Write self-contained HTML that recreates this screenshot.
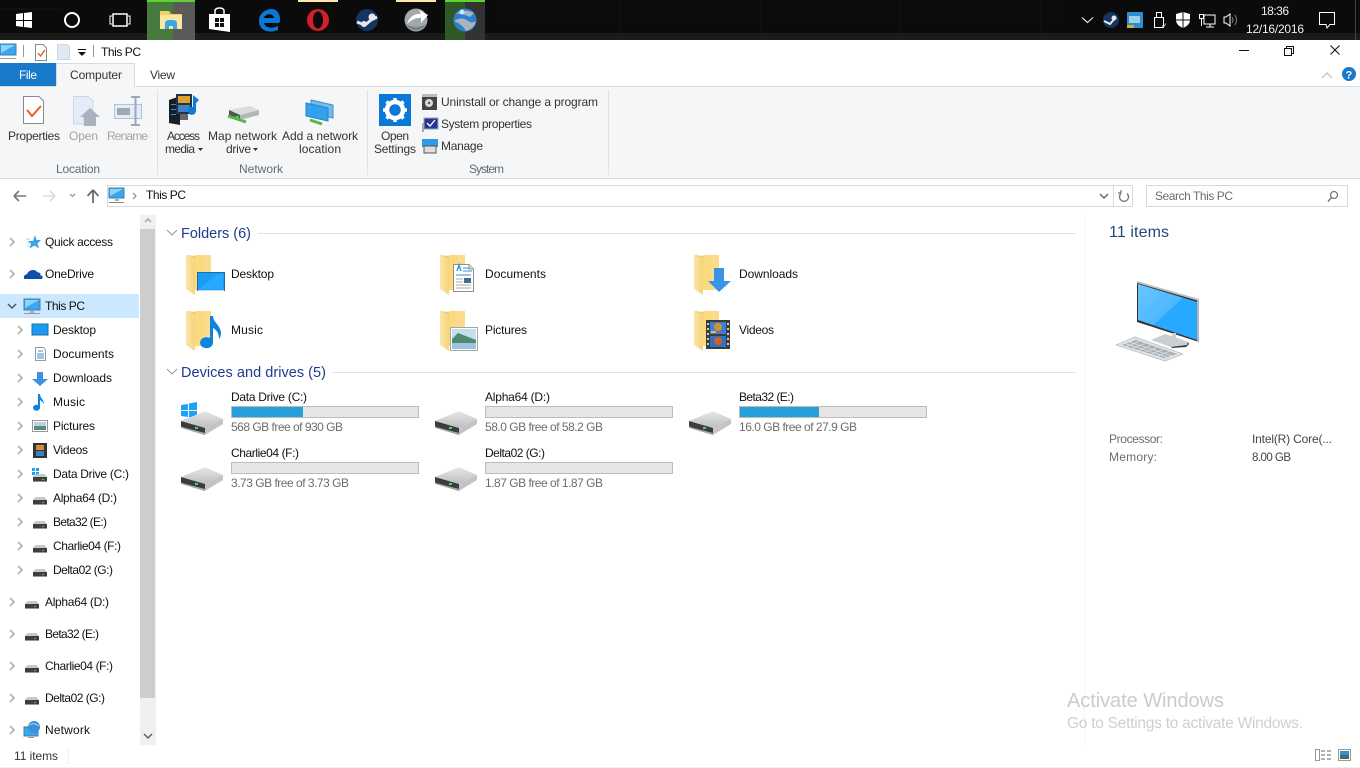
<!DOCTYPE html>
<html><head><meta charset="utf-8"><title>This PC</title>
<style>
html,body{margin:0;padding:0;background:#fff;overflow:hidden}
svg{display:block}
text{font-family:"Liberation Sans",sans-serif;font-size:12px;fill:#111}
.g{fill:#6d6d6d}.d{fill:#a3a3a3}.r{fill:#333}.l{fill:#636b75}
.h{font-size:14.5px;fill:#1e3a8f}
.w{fill:#f0f0f0}
</style></head><body>
<svg width="1360" height="768" viewBox="0 0 1360 768" xmlns="http://www.w3.org/2000/svg">
<defs>
<linearGradient id="scr" x1="0" y1="0" x2="1" y2="1"><stop offset="0" stop-color="#6cc5ff"/><stop offset=".5" stop-color="#4cb8ff"/><stop offset=".5" stop-color="#27a9ff"/><stop offset="1" stop-color="#27a9ff"/></linearGradient>
<linearGradient id="fo" x1="0" y1="0" x2="1" y2="0"><stop offset="0" stop-color="#fbe6a6"/><stop offset="1" stop-color="#f5d27e"/></linearGradient>
<linearGradient id="dt" x1="0" y1="0" x2="0" y2="1"><stop offset="0" stop-color="#e6e6e6"/><stop offset="1" stop-color="#bdbdbd"/></linearGradient>
<g id="chev"><path d="M-2-4 2 0-2 4" fill="none" stroke="#a6a6a6" stroke-width="1.5"/></g>
<g id="folder">
<path d="M9 0H25V35H9Z" fill="#fad97f"/>
<path d="M17 0H25V35H17Z" fill="#fbdc8c"/>
<path d="M0 0 9 3V40L0 34Z" fill="url(#fo)"/>
<path d="M9 3 0 0 9 1Z" fill="#f0c860"/>
</g>
<g id="sd">
<path d="M2.500 0H11.500L14 3H0Z" fill="#c8c8c8"/>
<rect x="0" y="3" width="14" height="5" fill="#3f3f3f"/>
<rect x="0" y="7" width="14" height="1" fill="#999"/>
<rect x="9" y="5" width="2" height="1" fill="#3fd04a"/>
</g>
<g id="bd">
<path d="M0 10 22 1Q24 0 26 1L42 8 24 17Z" fill="url(#dt)"/>
<path d="M24 17 42 8V13L24 24Z" fill="#c4c4c4"/>
<path d="M0 10 24 17V24L1 17Q0 16 0 14Z" fill="#3c3c3c"/>
<path d="M1 16 24 22V24L1 17Z" fill="#a8a8a8"/>
<rect x="14" y="16" width="3" height="2" fill="#42dd5a"/>
</g>
<g id="monS">
<rect x="0" y="0" width="16" height="11" fill="#3aa6ee" stroke="#3f7fa8"/>
<path d="M1 1H15L1 9Z" fill="#8fd3fb"/>
<rect x="6" y="12" width="4" height="2" fill="#aab"/>
<rect x="0" y="14" width="16" height="1" fill="#999"/>
</g>
</defs>

<!-- Taskbar -->
<rect width="1360" height="40" fill="#0b0b0b"/>
<rect y="33" width="1360" height="7" fill="#1b1b1b"/>
<g fill="#101010"><rect x="0" y="8" width="60" height="2"/><rect x="500" y="2" width="560" height="1"/><rect x="500" y="12" width="560" height="1"/><rect x="500" y="22" width="560" height="1"/><rect x="620" y="0" width="1" height="33"/><rect x="760" y="0" width="1" height="33"/><rect x="900" y="0" width="1" height="33"/><rect x="1040" y="0" width="1" height="33"/></g>
<rect x="147" width="26" height="40" fill="#487a3d"/>
<rect x="173" width="22" height="40" fill="#5a5a5a"/>
<rect x="147" width="48" height="2" fill="#5bd62e"/>
<rect x="298" width="40" height="2" fill="#fde8aa"/>
<rect x="396" width="40" height="2" fill="#fde8aa"/>
<rect x="445" width="20" height="40" fill="#2f5a27"/>
<rect x="465" width="20" height="40" fill="#333"/>
<rect x="445" width="40" height="2" fill="#5bd62e"/>
<path d="M16 14 23 13V20H16ZM24 13 32 12V20H24ZM16 21H23V27L16 26ZM24 21H32V28L24 27Z" fill="#fff"/>
<circle cx="72" cy="20" r="7" fill="none" stroke="#fff" stroke-width="2"/>
<path d="M113 14H127V26H113Z" fill="none" stroke="#fff" stroke-width="1.500"/>
<path d="M112 16H110V24H112M128 16H130V24H128" fill="none" stroke="#fff"/>
<!-- explorer -->
<path d="M160 11H169L171 14H182V29H160Z" fill="#f5cf63"/>
<rect x="160" y="15" width="22" height="14" fill="#fbe6a0"/>
<path d="M165 29V24Q165 20 169 20H173Q177 20 177 24V29H173V26H169V29Z" fill="#39a7e4"/>
<!-- store -->
<path d="M209 14H230V32L209 29Z" fill="#fff"/>
<path d="M215 14V11Q215 8 219.500 8T224 11V14" fill="none" stroke="#fff" stroke-width="1.500"/>
<path d="M215 18H219V22H215ZM220 18H224V22H220ZM215 23H219V27H215ZM220 23H224V27H220Z" fill="#111"/>
<!-- edge -->
<path d="M279 23H264C265 28 272 29 278 26V30C268 34 259 30 259 21 259 13 266 9 272 9 277 9 280 14 280 19 280 21 280 22 279 23ZM264 18H274C274 13 265 13 264 18Z" fill="#0a78d7" fill-rule="evenodd"/>
<!-- opera -->
<path d="M318 9A11 11 0 1 0 318 31 11 11 0 1 0 318 9ZM318 11.500C321 11.500 323 15 323 20S321 28.500 318 28.500 313 25 313 20 315 11.500 318 11.500Z" fill="#d21f2a" fill-rule="evenodd"/>
<!-- steam -->
<circle cx="367" cy="20" r="11" fill="#12365f"/>
<path d="M357 22 365 25 371 20 377 17" stroke="#e4e8ee" stroke-width="3" fill="none"/>
<circle cx="372" cy="17" r="3.500" fill="#e4e8ee"/><circle cx="364" cy="24" r="3" fill="#e4e8ee"/>
<!-- grey app -->
<circle cx="416" cy="20" r="11.500" fill="#a2a9ac"/>
<path d="M407 24Q411 13 421 14L419 10 428 15 421 23 421 18Q414 17 407 24Z" fill="#fff"/>
<path d="M406 24A11 11 0 0 0 426 24Q416 30 406 24Z" fill="#7c8386"/>
<!-- globe -->
<circle cx="465" cy="20" r="11.500" fill="#2f7fd0"/>
<path d="M456 14Q464 8 474 13L470 17Q462 13 456 14ZM454 21Q462 16 468 21 472 24 476 21 474 29 466 31 462 24 454 21Z" fill="#a9b4bc"/>
<circle cx="462" cy="12" r="2.500" fill="#cfe7fb"/>
<!-- tray -->
<path d="M1082 17.500 1087.500 22.500 1093 17.500" fill="none" stroke="#eee" stroke-width="1.100"/>
<circle cx="1111" cy="20" r="8" fill="#12365f"/><path d="M1104 21 1110 24 1116 17" stroke="#e8e8e8" stroke-width="2" fill="none"/><circle cx="1114" cy="18" r="2.500" fill="#e8e8e8"/>
<rect x="1127" y="12" width="16" height="16" rx="1" fill="#2c8fd0"/><rect x="1129" y="16" width="11" height="7" fill="#9ed0ea"/><rect x="1127" y="25" width="7" height="3" fill="#d8b030"/>
<path d="M1156.500 12.500H1161.500V17.500H1156.500ZM1154.500 17.500H1163.500V27.500H1154.500Z" fill="none" stroke="#fff"/><path d="M1162 25.500 1163.500 27 1166 23.500" fill="none" stroke="#bbb"/>
<path d="M1183 12 1176 14V20Q1176 25 1183 28 1190 25 1190 20V14Z" fill="#fff"/><path d="M1183 12V28M1176 20H1190" stroke="#111" stroke-width="1"/>
<path d="M1204 15H1215V24H1204ZM1199.500 14.500H1203.500V18.500H1199.500ZM1201.500 19V26M1206 27H1214M1210 24V27" fill="none" stroke="#fff"/>
<path d="M1224 17V23H1226L1230 26V14L1226 17Z" fill="none" stroke="#fff"/><path d="M1232 17Q1234 20 1232 23M1235 15Q1238 20 1235 25" fill="none" stroke="#888"/>
<text class="w" x="1261" y="15" textLength="28">18:36</text>
<text class="w" x="1246" y="33" textLength="58">12/16/2016</text>
<path d="M1319.500 12.500H1334.500V24.500H1330L1327 28 1326 24.500H1319.500Z" fill="none" stroke="#fff"/>
<rect x="1355" width="1" height="40" fill="#444"/>

<!-- Title bar -->
<g transform="translate(0,44)"><rect x="0" y="0" width="16" height="11" fill="#3aa6ee" stroke="#3f7fa8"/><path d="M1 1H15L1 9Z" fill="#8fd3fb"/><rect x="0" y="14" width="16" height="1" fill="#999"/></g>
<rect x="23" y="45" width="1" height="12" fill="#999"/>
<path d="M35.500 44.500H43L46.500 48V60.500H35.500Z" fill="#fff" stroke="#888"/><path d="M38 53 40.500 56 45 50" fill="none" stroke="#e8531f" stroke-width="1.300"/>
<path d="M57.500 44.500H67L69.500 47V59.500H57.500Z" fill="#dfe8f5" stroke="#ccd6e6"/>
<rect x="78" y="49" width="8" height="1" fill="#111"/><path d="M78 52H86L82 56Z" fill="#111"/>
<rect x="93" y="45" width="1" height="12" fill="#999"/>
<text x="101" y="56" textLength="40">This PC</text>
<rect x="1239" y="50" width="10" height="1" fill="#111"/>
<path d="M1284.500 48.500H1291.500V55.500H1284.500ZM1286.500 48V46.500H1293.500V53.500H1292" fill="none" stroke="#111"/>
<path d="M1330.500 45.500 1339.500 54.500M1339.500 45.500 1330.500 54.500" stroke="#111" stroke-width="1.100"/>

<!-- Tabs -->
<rect x="0" y="63" width="56" height="23" fill="#1979ca"/>
<text x="19" y="79" textLength="18" style="fill:#fff">File</text>
<path d="M56.500 86V63.500H134.500V86" fill="#f5f6f7" stroke="#dadbdc"/>
<text x="70" y="79" textLength="52" style="fill:#333">Computer</text>
<text x="150" y="79" textLength="25" style="fill:#333">View</text>
<path d="M1322 78 1327 73 1332 78" fill="none" stroke="#c8c8c8" stroke-width="1.500"/>
<circle cx="1349" cy="74" r="7" fill="#1979ca"/>
<text x="1345.500" y="78.500" style="fill:#fff;font-size:11px;font-weight:bold">?</text>

<!-- Ribbon -->
<rect x="0" y="86" width="1360" height="92" fill="#f5f6f7"/>
<rect x="134" y="86" width="1226" height="1" fill="#dadbdc"/>
<rect x="0" y="86" width="56" height="1" fill="#dadbdc"/>
<rect x="0" y="178" width="1360" height="1" fill="#dadbdc"/>
<rect x="157" y="90" width="1" height="85" fill="#dfe1e3"/>
<rect x="367" y="90" width="1" height="85" fill="#dfe1e3"/>
<rect x="608" y="90" width="1" height="85" fill="#dfe1e3"/>
<!-- properties -->
<path d="M23.500 96.500H39L43.500 101V123.500H23.500Z" fill="#fff" stroke="#8a8a8a"/>
<path d="M27 110 32 116 41 106" fill="none" stroke="#ef5a24" stroke-width="2"/>
<!-- open -->
<path d="M73.500 96.500H88L93 101V117H84V124H73.500Z" fill="#e4ecf8" stroke="#ccd6e8"/>
<path d="M84 126V117H80L90 108 100 117H96V126Z" fill="#a8b3bf"/>
<!-- rename -->
<rect x="114.500" y="104.500" width="27" height="14" fill="#e4ecf8" stroke="#b4c2d4"/>
<rect x="117" y="108" width="13" height="7" fill="#9aa8b8"/>
<path d="M131 97H140M131 125H140M135.500 97V125" fill="none" stroke="#9aa8b8" stroke-width="2"/>
<!-- access media -->
<path d="M169 100 180 96V125L169 123Z" fill="#1a1d24"/>
<path d="M180 96 188 99V120H180Z" fill="#63666c"/>
<g fill="#2c8fd6"><rect x="171" y="104" width="5" height="1"/><rect x="171" y="109" width="6" height="1"/><rect x="171" y="114" width="5" height="1"/></g>
<rect x="176" y="94" width="16" height="20" fill="#26324a"/><rect x="178" y="96" width="12" height="7" fill="#d8a130"/><rect x="178" y="105" width="12" height="7" fill="#3d82c4"/>
<path d="M193 95 199 100 196 103V111A4 4 0 1 1 193 107Z" fill="#0b7dd8"/>
<!-- map net drive -->
<path d="M229 110 250 106 259 110 240 115Z" fill="#dcdcdc"/>
<path d="M229 110 240 115V120L229 116Z" fill="#555"/>
<path d="M240 115 259 110V115L240 120Z" fill="#b5b5b5"/>
<path d="M228 116 246 122" stroke="#58b548" stroke-width="3"/>
<rect x="236" y="116" width="3" height="2" fill="#33dd55"/>
<!-- add net location -->
<path d="M311 100 333 105V118L311 113Z" fill="#6cbdf0" stroke="#3e8fc6"/>
<path d="M306 103 328 108V121L306 116Z" fill="#31a2ee" stroke="#2f7fb8"/>
<path d="M310 120 322 124" stroke="#58b548" stroke-width="3"/>
<!-- settings -->
<rect x="379" y="94" width="32" height="32" fill="#0a78d7"/>
<circle cx="395" cy="110" r="8" fill="none" stroke="#fff" stroke-width="4.500"/>
<g stroke="#fff" stroke-width="3.500"><path d="M395 98V102M395 118V122M383 110H387M403 110H407M386.500 101.500 389.300 104.300M400.700 115.700 403.500 118.500M386.500 118.500 389.300 115.700M400.700 104.300 403.500 101.500"/></g>
<!-- mini -->
<rect x="422" y="96" width="15" height="14" fill="#444"/><rect x="422" y="94" width="15" height="3" fill="#bbb"/><circle cx="429" cy="103" r="4" fill="#d8d8d8"/><circle cx="429" cy="103" r="1.200" fill="#555"/>
<rect x="424" y="118" width="14" height="11" fill="#26358f" stroke="#9aa8c0"/><path d="M427 123 430 126 435 120" stroke="#fff" stroke-width="1.300" fill="none"/><rect x="422" y="123" width="2" height="9" fill="#aaa"/>
<rect x="422" y="139" width="16" height="8" fill="#2f9ae0"/><rect x="424" y="146" width="12" height="7" fill="#ddd" stroke="#555"/>
<g>
<text x="8" y="140" textLength="52" class="r">Properties</text>
<text x="69" y="140" textLength="29" class="d">Open</text>
<text x="107" y="140" textLength="41" class="d">Rename</text>
<text x="167" y="140" textLength="33" class="r">Access</text>
<text x="165" y="153" textLength="30" class="r">media</text>
<path d="M198 148H203L200.500 151Z" fill="#333"/>
<text x="208" y="140" textLength="69" class="r">Map network</text>
<text x="226" y="153" textLength="25" class="r">drive</text>
<path d="M253 148H258L255.500 151Z" fill="#333"/>
<text x="282" y="140" textLength="76" class="r">Add a network</text>
<text x="299" y="153" textLength="42" class="r">location</text>
<text x="381" y="140" textLength="28" class="r">Open</text>
<text x="374" y="153" textLength="42" class="r">Settings</text>
<text x="441" y="106" textLength="157" class="r">Uninstall or change a program</text>
<text x="441" y="128" textLength="91" class="r">System properties</text>
<text x="441" y="150" textLength="42" class="r">Manage</text>
<text x="56" y="173" textLength="44" class="l">Location</text>
<text x="239" y="173" textLength="44" class="l">Network</text>
<text x="469" y="173" textLength="35" class="l">System</text>
</g>

<!-- Address row -->
<path d="M14 196H26M14 196 19 191M14 196 19 201" fill="none" stroke="#777" stroke-width="1.600"/>
<path d="M43 196H55M55 196 50 191M55 196 50 201" fill="none" stroke="#ddd" stroke-width="1.600"/>
<path d="M70 194 72.500 196.500 75 194" fill="none" stroke="#999" stroke-width="1.300"/>
<path d="M93 203V191M93 190 87.500 196M93 190 98.500 196" fill="none" stroke="#666" stroke-width="1.700"/>
<rect x="107.500" y="185.500" width="1025" height="21" fill="#fff" stroke="#d9d9d9"/>
<g transform="translate(109,188)"><rect x="0" y="0" width="15" height="10" fill="#3aa6ee" stroke="#3f7fa8"/><path d="M1 1H14L1 8Z" fill="#8fd3fb"/><rect x="6" y="11" width="4" height="2" fill="#aab"/><rect x="0" y="14" width="15" height="1" fill="#888"/></g>
<path d="M133 193 136 196 133 199" fill="none" stroke="#888" stroke-width="1.200"/>
<text x="146" y="199" textLength="40">This PC</text>
<path d="M1100 194 1104 198 1108 194" fill="none" stroke="#666" stroke-width="1.500"/>
<rect x="1113" y="186" width="1" height="20" fill="#d9d9d9"/>
<path d="M1121 193.500A4.500 4.500 0 1 0 1127 193.500M1121 193V190M1121 193H1118" fill="none" stroke="#777" stroke-width="1.300"/>
<rect x="1146.500" y="185.500" width="201" height="21" fill="#fff" stroke="#d9d9d9"/>
<text x="1155" y="200" textLength="78" class="g">Search This PC</text>
<circle cx="1334" cy="195" r="3.500" fill="none" stroke="#777" stroke-width="1.300"/><path d="M1331.500 197.500 1328 201.500" stroke="#777" stroke-width="1.500"/>

<!-- Nav pane -->
<rect x="0" y="294" width="139" height="24" fill="#cce8ff"/>
<rect x="140" y="215" width="16" height="530" fill="#f0f0f0"/>
<rect x="140" y="229" width="15" height="469" fill="#cdcdcd"/>
<path d="M145 222 148 219 151 222" fill="none" stroke="#a6a6a6" stroke-width="1.500"/>
<path d="M144 734 148 738 152 734" fill="none" stroke="#606060" stroke-width="1.500"/>
<use href="#chev" x="12" y="242"/><use href="#chev" x="12" y="274"/>
<path d="M8 304 12 308 16 304" fill="none" stroke="#555" stroke-width="1.500"/>
<use href="#chev" x="20" y="330"/><use href="#chev" x="20" y="354"/><use href="#chev" x="20" y="378"/><use href="#chev" x="20" y="402"/><use href="#chev" x="20" y="426"/><use href="#chev" x="20" y="450"/><use href="#chev" x="20" y="474"/><use href="#chev" x="20" y="498"/><use href="#chev" x="20" y="522"/><use href="#chev" x="20" y="546"/><use href="#chev" x="20" y="570"/>
<use href="#chev" x="12" y="602"/><use href="#chev" x="12" y="634"/><use href="#chev" x="12" y="666"/><use href="#chev" x="12" y="698"/><use href="#chev" x="12" y="730"/>
<!-- quick access star -->
<path d="M35 235 36.500 240H41L37.500 243.500 39 248.500 34.500 245.500 29.500 248.500 31 243.500 28 241H33Z" fill="#3ba2e8"/>
<path d="M26 239H30M27 243H30M27 246H29" stroke="#9dd0f2"/>
<!-- onedrive -->
<path d="M24 279Q23 275 27 274 29 270 33 270 36 270 37 272 42 273 40 275 44 276 42 279Z" fill="#0f4fa8"/>
<use href="#monS" x="24" y="299"/>
<rect x="32" y="324" width="16" height="11" fill="#1c9bf2" stroke="#1a6fa8"/>
<path d="M35.500 347.500H43.500L45.500 350V360.500H35.500Z" fill="#fff" stroke="#999"/><path d="M38 351H43M37 354H44M37 356H44M37 358H44" stroke="#3a8fd0"/>
<path d="M37 372H43V379H48L40 386 32 379H37Z" fill="#3b8fe0"/>
<path d="M38 394H40C40 398 44 400 44 404 43 402 41 401 40 400V408A3.500 3 0 1 1 38 405Z" fill="#0a84e0"/>
<rect x="32.500" y="420.500" width="15" height="11" fill="#fff" stroke="#999"/><rect x="34" y="422" width="12" height="4" fill="#b8d4e0"/><rect x="34" y="426" width="12" height="4" fill="#5a8a78"/>
<rect x="33" y="443" width="14" height="15" fill="#333"/><rect x="36" y="445" width="8" height="5" fill="#d88a40"/><rect x="36" y="451" width="8" height="5" fill="#3d82c4"/>
<g fill="#1ba1f7"><rect x="32" y="468" width="3" height="3"/><rect x="36" y="468" width="3" height="3"/><rect x="32" y="472" width="3" height="3"/><rect x="36" y="472" width="3" height="3"/></g>
<use href="#sd" x="33" y="474"/>
<use href="#sd" x="33" y="497"/><use href="#sd" x="33" y="521"/><use href="#sd" x="33" y="545"/><use href="#sd" x="33" y="569"/>
<use href="#sd" x="25" y="601"/><use href="#sd" x="25" y="633"/><use href="#sd" x="25" y="665"/><use href="#sd" x="25" y="697"/>
<rect x="24" y="727" width="14" height="9" fill="#3aa6ee" stroke="#3f7fa8"/><circle cx="34" cy="727" r="6" fill="#3c90d8"/><path d="M29 725Q34 722 39 726" stroke="#a8d4f2" fill="none"/><rect x="28" y="737" width="6" height="1" fill="#999"/>
<text x="45" y="246" textLength="68">Quick access</text>
<text x="45" y="278" textLength="49">OneDrive</text>
<text x="45" y="310" textLength="40">This PC</text>
<text x="53" y="334" textLength="43">Desktop</text>
<text x="53" y="358" textLength="61">Documents</text>
<text x="53" y="382" textLength="59">Downloads</text>
<text x="53" y="406" textLength="32">Music</text>
<text x="53" y="430" textLength="42">Pictures</text>
<text x="53" y="454" textLength="35">Videos</text>
<text x="53" y="478" textLength="76">Data Drive (C:)</text>
<text x="53" y="502" textLength="64">Alpha64 (D:)</text>
<text x="53" y="526" textLength="54">Beta32 (E:)</text>
<text x="53" y="550" textLength="68">Charlie04 (F:)</text>
<text x="53" y="574" textLength="60">Delta02 (G:)</text>
<text x="45" y="606" textLength="64">Alpha64 (D:)</text>
<text x="45" y="638" textLength="54">Beta32 (E:)</text>
<text x="45" y="670" textLength="68">Charlie04 (F:)</text>
<text x="45" y="702" textLength="60">Delta02 (G:)</text>
<text x="45" y="734" textLength="45">Network</text>
<text x="14" y="760" textLength="44" style="fill:#333">11 items</text>
<rect x="68" y="748" width="1" height="16" fill="#f0f0f0"/>

<!-- Main content -->
<path d="M167 230 172 235 177 230" fill="none" stroke="#999" stroke-width="1.100"/>
<text x="181" y="238" textLength="70" class="h">Folders (6)</text>
<rect x="258" y="233" width="818" height="1" fill="#e3e3e3"/>
<path d="M167 369 172 374 177 369" fill="none" stroke="#999" stroke-width="1.100"/>
<text x="181" y="377" textLength="145" class="h">Devices and drives (5)</text>
<rect x="333" y="372" width="743" height="1" fill="#e3e3e3"/>

<use href="#folder" x="186" y="255"/><use href="#folder" x="440" y="255"/><use href="#folder" x="694" y="255"/>
<use href="#folder" x="186" y="311"/><use href="#folder" x="440" y="311"/><use href="#folder" x="694" y="311"/>
<!-- desktop -->
<rect x="197.500" y="272.500" width="27" height="18" fill="#1b9df6" stroke="#1c6fa6"/>
<path d="M199 289 218 274H223V289Z" fill="#26a9ff"/>
<rect x="198" y="290" width="26" height="1" fill="#bfe3fa"/>
<!-- music -->
<path d="M210 316H213C213 322 221 326 221 333 221 336 220 338 219 339 219 334 217 330 213 328V342A6.500 5.500 0 1 1 210 338Z" fill="#0a84e0"/>
<!-- documents -->
<path d="M453.500 264.500H469L473.500 269V291.500H453.500Z" fill="#fff" stroke="#8f8f8f"/>
<path d="M469 264.500V269H473.500" fill="#ddd" stroke="#8f8f8f"/>
<path d="M457 271 459 265 461 271" fill="none" stroke="#2f9ae8" stroke-width="1.500"/>
<path d="M463 268H469M463 271H472M456 275H471" stroke="#3a8fd0"/>
<path d="M456 279H463M456 282H463M456 285H471M456 288H471" stroke="#aaa"/>
<rect x="464" y="278" width="7" height="5" fill="#3f6f80"/>
<!-- downloads -->
<path d="M714 268H724V281H731L719 292 708 281H714Z" fill="#3a94e6"/>
<!-- pictures -->
<rect x="450.500" y="327.500" width="27" height="23" fill="#fff" stroke="#a6a6a6"/>
<rect x="452" y="329" width="24" height="11" fill="#c4e0f0"/>
<path d="M452 339 458 333 476 340V343H452Z" fill="#4e8a70"/>
<rect x="452" y="343" width="24" height="6" fill="#9cc4dc"/>
<!-- videos -->
<rect x="706" y="320" width="24" height="29" fill="#3c3c3c"/>
<rect x="710" y="322" width="16" height="12" fill="#3d7fd0"/><rect x="710" y="336" width="16" height="11" fill="#2f70c0"/>
<circle cx="718" cy="327" r="4" fill="#d8902a"/><circle cx="718" cy="341" r="4" fill="#d0602a"/>
<rect x="711" y="331" width="5" height="2" fill="#d8c040"/>
<g fill="#ccc"><rect x="707" y="323" width="2" height="2"/><rect x="707" y="328" width="2" height="2"/><rect x="707" y="333" width="2" height="2"/><rect x="707" y="338" width="2" height="2"/><rect x="707" y="343" width="2" height="2"/><rect x="727" y="323" width="2" height="2"/><rect x="727" y="328" width="2" height="2"/><rect x="727" y="333" width="2" height="2"/><rect x="727" y="338" width="2" height="2"/><rect x="727" y="343" width="2" height="2"/></g>
<text x="231" y="278" textLength="43">Desktop</text>
<text x="485" y="278" textLength="61">Documents</text>
<text x="739" y="278" textLength="59">Downloads</text>
<text x="231" y="334" textLength="32">Music</text>
<text x="485" y="334" textLength="42">Pictures</text>
<text x="739" y="334" textLength="35">Videos</text>

<!-- drives -->
<g fill="#1ba1f7"><path d="M181 405 188 404V410H181ZM189 403.500 197 402V410H189ZM181 411H188V417L181 416ZM189 411H197V418L189 417Z"/></g>
<use href="#bd" x="181" y="411"/><use href="#bd" x="435" y="411"/><use href="#bd" x="689" y="411"/>
<use href="#bd" x="181" y="467"/><use href="#bd" x="435" y="467"/>
<g fill="#e6e6e6" stroke="#bcbcbc">
<rect x="231.500" y="406.500" width="187" height="11"/><rect x="485.500" y="406.500" width="187" height="11"/><rect x="739.500" y="406.500" width="187" height="11"/>
<rect x="231.500" y="462.500" width="187" height="11"/><rect x="485.500" y="462.500" width="187" height="11"/>
</g>
<rect x="232" y="407" width="71" height="10" fill="#26a0da"/>
<rect x="740" y="407" width="79" height="10" fill="#26a0da"/>
<text x="231" y="401" textLength="76">Data Drive (C:)</text>
<text x="231" y="431" textLength="112" class="g">568 GB free of 930 GB</text>
<text x="485" y="401" textLength="65">Alpha64 (D:)</text>
<text x="485" y="431" textLength="118" class="g">58.0 GB free of 58.2 GB</text>
<text x="739" y="401" textLength="55">Beta32 (E:)</text>
<text x="739" y="431" textLength="118" class="g">16.0 GB free of 27.9 GB</text>
<text x="231" y="457" textLength="68">Charlie04 (F:)</text>
<text x="231" y="487" textLength="118" class="g">3.73 GB free of 3.73 GB</text>
<text x="485" y="457" textLength="60">Delta02 (G:)</text>
<text x="485" y="487" textLength="118" class="g">1.87 GB free of 1.87 GB</text>

<!-- Details pane -->
<rect x="1084" y="215" width="1" height="530" fill="#f4f4f4"/>
<text x="1109" y="237" textLength="60" style="font-size:16px;fill:#1f4a7a">11 items</text>
<path d="M1137 282 1199 300V342L1137 322Z" fill="#333"/>
<path d="M1138 284 1197 302V340L1138 320Z" fill="url(#scr)"/>
<path d="M1137 281 1199 299 1199 301 1137 283Z" fill="#b9c2c8"/>
<rect x="1197" y="300" width="2" height="42" fill="#aeb7bd"/>
<path d="M1172 333H1176V338H1172Z" fill="#c8d0d4"/>
<path d="M1151 340 1165 334 1189 342 1187 345 1171 347Z" fill="#c7cfd3"/>
<path d="M1171 347 1187 345 1188 342 1189 344 1186 347 1172 348Z" fill="#333"/>
<path d="M1116 345 1135 337 1183 354 1165 361Z" fill="#dfe3e6" stroke="#a9afb3" stroke-width=".6"/>
<path d="M1122 345 1136 340 1177 354 1164 358Z" fill="#a8aeb2"/>
<g stroke="#dfe3e6" stroke-width=".7"><path d="M1125 347 1139 341.500M1131 349 1145 343.500M1137 351 1151 345.500M1143 353 1157 347.500M1149 355 1163 349.500M1155 357 1169 351.500"/><path d="M1125 343.500 1170 358M1129 342 1174 356.500"/></g>
<text x="1109" y="443" textLength="54" class="g">Processor:</text>
<text x="1109" y="461" textLength="48" class="g">Memory:</text>
<text x="1252" y="443" textLength="80" style="fill:#444">Intel(R) Core(...</text>
<text x="1252" y="461" textLength="39" style="fill:#444;font-size:11.5px">8.00 GB</text>

<!-- Activate -->
<text x="1067" y="707" textLength="157" style="font-size:20px;fill:#cbcbcb">Activate Windows</text>
<text x="1067" y="728" textLength="236" style="font-size:15.500px;fill:#cfcfcf">Go to Settings to activate Windows.</text>

<!-- Status icons -->
<rect x="1315.500" y="749.500" width="4" height="11" fill="#fff" stroke="#999"/>
<path d="M1321 751H1325M1327 751H1331M1321 755H1325M1327 755H1331M1321 759H1325M1327 759H1331" stroke="#666"/>
<rect x="1338.500" y="749.500" width="12" height="11" fill="#fff" stroke="#999"/>
<rect x="1340" y="751" width="9" height="4" fill="#2f90d8"/><rect x="1340" y="755" width="9" height="4" fill="#3f6f60"/>
<rect x="0" y="767" width="1360" height="1" fill="#efefef"/>
</svg>
</body></html>
